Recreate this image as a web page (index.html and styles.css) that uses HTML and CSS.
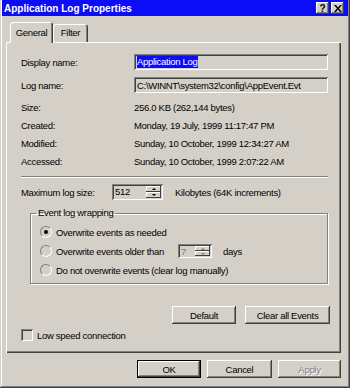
FILE: index.html
```html
<!DOCTYPE html>
<html lang="en">
<head>
    <meta charset="UTF-8">
    <title>Application Log Properties</title>
    <link rel="stylesheet" href="styles.css">
</head>
<body>
    <div class="window">
        <!-- Caption bar -->
        <div class="titlebar">
            <span class="title">Application Log Properties</span>
            <div class="caption-buttons">
                <span class="cap-btn help">?</span>
                <span class="cap-btn close">
                    <svg width="8" height="7" viewBox="0 0 8 7"><path d="M0 0h2l2 2.4L6 0h2L5 3.5 8 7H6L4 4.6 2 7H0l3-3.5z" fill="#000"/></svg>
                </span>
            </div>
        </div>

        <!-- Tabs -->
        <div class="tabs">
            <div class="tab active">General</div>
            <div class="tab filter">Filter</div>
        </div>

        <!-- General page -->
        <div class="page">
            <div class="row field-row">
                <span class="label">Display name:</span>
                <div class="field sunken"><span class="selected">Application Log</span></div>
            </div>
            <div class="row field-row second">
                <span class="label">Log name:</span>
                <div class="field sunken">C:\WINNT\system32\config\AppEvent.Evt</div>
            </div>

            <div class="info">
                <div class="row info-row"><span class="label">Size:</span><span>256.0 KB (262,144 bytes)</span></div>
                <div class="row info-row"><span class="label">Created:</span><span>Monday, 19 July, 1999 11:17:47 PM</span></div>
                <div class="row info-row"><span class="label">Modified:</span><span>Sunday, 10 October, 1999 12:34:27 AM</span></div>
                <div class="row info-row"><span class="label">Accessed:</span><span>Sunday, 10 October, 1999 2:07:22 AM</span></div>
            </div>

            <div class="separator"></div>

            <div class="row max-row">
                <span class="max-label">Maximum log size:</span>
                <div class="spin sunken size-spin">
                    <span class="spin-value">512</span>
                    <div class="spin-arrows">
                        <span class="spin-btn"><i class="arrow up"></i></span>
                        <span class="spin-btn"><i class="arrow down"></i></span>
                    </div>
                </div>
                <span class="units">Kilobytes (64K increments)</span>
            </div>

            <fieldset class="group">
                <legend>Event log wrapping</legend>
                <div class="row radio-row">
                    <span class="radio checked"></span>
                    <span>Overwrite events as needed</span>
                </div>
                <div class="row radio-row second">
                    <span class="radio"></span>
                    <span class="older-text">Overwrite events older than</span>
                    <div class="spin sunken days-spin disabled">
                        <span class="spin-value">7</span>
                        <div class="spin-arrows">
                            <span class="spin-btn"><i class="arrow up"></i></span>
                            <span class="spin-btn"><i class="arrow down"></i></span>
                        </div>
                    </div>
                    <span class="days">days</span>
                </div>
                <div class="row radio-row">
                    <span class="radio"></span>
                    <span>Do not overwrite events (clear log manually)</span>
                </div>
            </fieldset>

            <div class="row page-buttons">
                <div class="btn btn-default-size">Default</div>
                <div class="btn btn-clear">Clear all Events</div>
            </div>

            <div class="row check-row">
                <span class="checkbox sunken"></span>
                <span>Low speed connection</span>
            </div>
        </div>

        <!-- Dialog buttons -->
        <div class="row dialog-buttons">
            <div class="btn default btn-ok">OK</div>
            <div class="btn btn-cancel">Cancel</div>
            <div class="btn disabled btn-apply">Apply</div>
        </div>
    </div>
</body>
</html>
```

FILE: styles.css
```css
body { margin: 0; font-family: "Liberation Sans", Arial, sans-serif; font-size: 9.5px; letter-spacing: -0.3px; color: #000; background: #d4d0c8; }
.window { width: 350px; height: 388px; box-sizing: border-box; padding: 0 2px 2px 2px; background: #d4d0c8; display: flex; flex-direction: column;
    box-shadow: inset -1px -1px #404040, inset 1px 0 #d4d0c8, inset -2px -2px #808080, inset 2px 0 #fff; }

/* caption */
.titlebar { height: 16px; flex: none; display: flex; align-items: center; justify-content: space-between; padding: 0 4px 0 2px; background: #0c0cf6; color: #fff; }
.title { font-weight: bold; font-size: 10px; letter-spacing: 0; }
.caption-buttons { display: flex; gap: 2px; }
.cap-btn { width: 13px; height: 12px; box-sizing: border-box; display: flex; align-items: center; justify-content: center; background: #d4d0c8; color: #000; font-weight: bold; font-size: 10px;
    box-shadow: inset -1px -1px #404040, inset 1px 1px #fff, inset -2px -2px #808080; }

/* tabs */
.tabs { display: flex; align-items: flex-end; height: 20px; margin: 6px 0 0 8px; flex: none; }
.tab { box-sizing: border-box; height: 18px; line-height: 17px; text-align: center; background: #d4d0c8; border-radius: 3px 3px 0 0;
    box-shadow: inset 1px 1px #fff, inset -1px 0 #404040, inset -2px 0 #808080; }
.tab.active { width: 43px; height: 21px; line-height: 21px; margin-bottom: -1px; z-index: 1; }
.tab.filter { width: 35px; }

/* page */
.page { height: 311px; flex: none; box-sizing: border-box; margin: 0 7px 0 4px; padding: 12px 13px 0 15px;
    box-shadow: inset 1px 1px #fff, inset -1px -1px #404040, inset -2px -2px #808080; }
.row { display: flex; align-items: center; white-space: nowrap; }
.label { width: 113px; flex: none; }
.sunken { box-shadow: inset 1px 1px #808080, inset -1px -1px #fff, inset 2px 2px #404040, inset -2px -2px #d4d0c8; }
.field-row { height: 16px; }
.field-row.second { margin-top: 7px; }
.field { flex: 1; height: 16px; box-sizing: border-box; padding: 0 3px; display: flex; align-items: center; overflow: hidden; }
.selected { background: #0c0cf6; color: #fff; line-height: 12px; padding: 0 1px 0 0; }
.info { margin-top: 5px; }
.info-row { height: 18px; }
.separator { margin: 6px 0 0 0; height: 2px; box-shadow: inset 0 1px #808080, inset 0 -1px #fff; }

.max-row { height: 16px; margin-top: 6px; }
.max-label { width: 91px; flex: none; }
.spin { height: 16px; box-sizing: border-box; padding: 2px; display: flex; }
.size-spin { width: 51px; }
.spin-value { flex: 1; line-height: 12px; padding-left: 1px; }
.spin-arrows { width: 15px; display: flex; flex-direction: column; }
.spin-btn { flex: 1; display: flex; align-items: center; justify-content: center; background: #d4d0c8; box-shadow: inset -1px -1px #404040, inset 1px 1px #fff; }
.arrow { width: 0; height: 0; border-left: 2px solid transparent; border-right: 2px solid transparent; }
.arrow.up { border-bottom: 2px solid #000; }
.arrow.down { border-top: 2px solid #000; }
.units { margin-left: 12px; }

/* group */
.group { margin: 7px 0 0 9px; padding: 4px 0 4px 9px; width: 298px; box-sizing: border-box; border: 1px solid #808080; box-shadow: inset 1px 1px #fff, 1px 1px #fff; }
.group legend { padding: 0 2px; margin-left: -4px; line-height: 12px; }
.radio-row { height: 18px; }
.radio-row.second { margin: 1px 0; }
.radio { width: 12px; height: 12px; box-sizing: border-box; margin-right: 4px; border-radius: 50%; border: 1px solid; border-color: #808080 #fff #fff #808080;
    background: #d4d0c8; display: flex; align-items: center; justify-content: center; }
.radio.checked::after { content: ""; width: 4px; height: 4px; border-radius: 50%; background: #000; }
.older-text { width: 122px; flex: none; }
.days-spin { width: 34px; height: 14px; }
.disabled { color: #808080; }
.days-spin .arrow.up { border-bottom-color: #808080; }
.days-spin .arrow.down { border-top-color: #808080; }
.days { margin-left: 11px; }

/* buttons */
.btn { height: 18px; box-sizing: border-box; display: flex; align-items: center; justify-content: center; background: #d4d0c8;
    box-shadow: inset -1px -1px #404040, inset 1px 1px #fff, inset -2px -2px #808080; }
.btn.default { box-shadow: inset 0 0 0 1px #000, inset -2px -2px #404040, inset 2px 2px #fff, inset -3px -3px #808080; }
.btn.disabled { color: #808080; text-shadow: 1px 1px #fff; }
.page-buttons { height: 18px; margin: 22px -2px 0 0; justify-content: flex-end; gap: 9px; }
.btn-default-size { width: 64px; }
.btn-clear { width: 85px; }
.check-row { height: 12px; margin-top: 5px; }
.checkbox { width: 12px; height: 12px; box-sizing: border-box; margin-right: 4px; }

.dialog-buttons { height: 18px; margin: 7px 7px 0 0; justify-content: flex-end; gap: 6px; }
.btn-ok { width: 64px; }
.btn-cancel { width: 65px; }
.btn-apply { width: 63px; }
```
